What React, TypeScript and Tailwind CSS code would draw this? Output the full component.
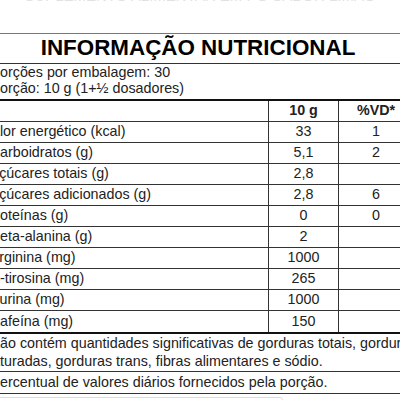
type Row = { label: string; value: string; vd: string; pad: string }

const rows: Row[] = [
  { label: 'Valor energético (kcal)', value: '33', vd: '1', pad: 'pl-[0.5px]' },
  { label: 'Carboidratos (g)', value: '5,1', vd: '2', pad: 'pl-[6.7px]' },
  { label: 'Açúcares totais (g)', value: '2,8', vd: '', pad: 'pl-[6.7px]' },
  { label: 'Açúcares adicionados (g)', value: '2,8', vd: '6', pad: 'pl-[6.7px]' },
  { label: 'Proteínas (g)', value: '0', vd: '0', pad: 'pl-[2.7px]' },
  { label: 'Beta-alanina (g)', value: '2', vd: '', pad: 'pl-[7.5px]' },
  { label: 'Arginina (mg)', value: '1000', vd: '', pad: 'pl-[6.7px]' },
  { label: 'L-tirosina (mg)', value: '265', vd: '', pad: 'pl-[9px]' },
  { label: 'Taurina (mg)', value: '1000', vd: '', pad: 'pl-[1.4px]' },
  { label: 'Cafeína (mg)', value: '150', vd: '', pad: 'pl-[6.7px]' },
]

export default function App() {
  return (
    <div className="w-[400px] h-[400px] overflow-hidden bg-white text-[#222] font-['Liberation_Sans',Arial,sans-serif]">
      {/* faixa cortada no topo */}
      <div className="h-[33px] flex justify-center">
        <p className="mt-[-12px] text-[15px] leading-[16px] text-[#e2e2e2] whitespace-nowrap">
          SUPLEMENTO ALIMENTAR EM PÓ SABOR LIMÃO
        </p>
      </div>

      <div className="ml-[-17px] w-[430px]">
        {/* título */}
        <div className="h-[31px] border-t border-b border-t-[#777] border-b-[#333] flex items-center justify-center">
          <h1 className="text-[22.4px] font-bold text-black leading-none">INFORMAÇÃO NUTRICIONAL</h1>
        </div>

        {/* porções */}
        <div className="h-[37px] border-b-2 border-[#111] pl-[7.5px] text-[14.3px] leading-[16px]">
          <p>Porções por embalagem: 30</p>
          <p>Porção: 10 g (1+½ dosadores)</p>
        </div>

        {/* cabeçalho */}
        <div className="h-[21px] flex border-b border-[#333] text-[14.3px] font-bold">
          <div className="w-[285px]" />
          <div className="w-[70px] border-l border-[#333] flex items-center justify-center">10 g</div>
          <div className="w-[75px] border-l border-[#333] flex items-center justify-center">%VD*</div>
        </div>

        {/* linhas */}
        <div className="border-b-2 border-[#111] text-[14.3px]">
          {rows.map((r, i) => (
            <div
              key={r.label}
              className={`h-[21px] flex ${i < rows.length - 1 ? 'border-b border-[#333]' : ''}`}
            >
              <div className={`w-[285px] flex items-center whitespace-nowrap ${r.pad}`}>{r.label}</div>
              <div className="w-[70px] border-l border-[#333] flex items-center justify-center">{r.value}</div>
              <div className="w-[75px] border-l border-[#333] flex items-center justify-center">{r.vd}</div>
            </div>
          ))}
        </div>

        {/* notas */}
        <div className="h-[38px] border-b border-[#333] pt-[1px] pl-[1.9px] text-[14.3px] leading-[17.5px] whitespace-nowrap">
          <p className="indent-[4.8px]">
            Não contém quantidades significativas de gorduras totais, gorduras
            <br />
            saturadas, gorduras trans, fibras alimentares e sódio.
          </p>
        </div>
        <div className="h-[22px] border-b border-[#333] pt-[1px] pl-[1.9px] text-[14.3px] leading-[18px] whitespace-nowrap">
          *Percentual de valores diários fornecidos pela porção.
        </div>

        <div className="mt-[3px] w-[300px] h-[20px] border border-[#ddd] rounded-[3px]" />
      </div>
    </div>
  )
}
